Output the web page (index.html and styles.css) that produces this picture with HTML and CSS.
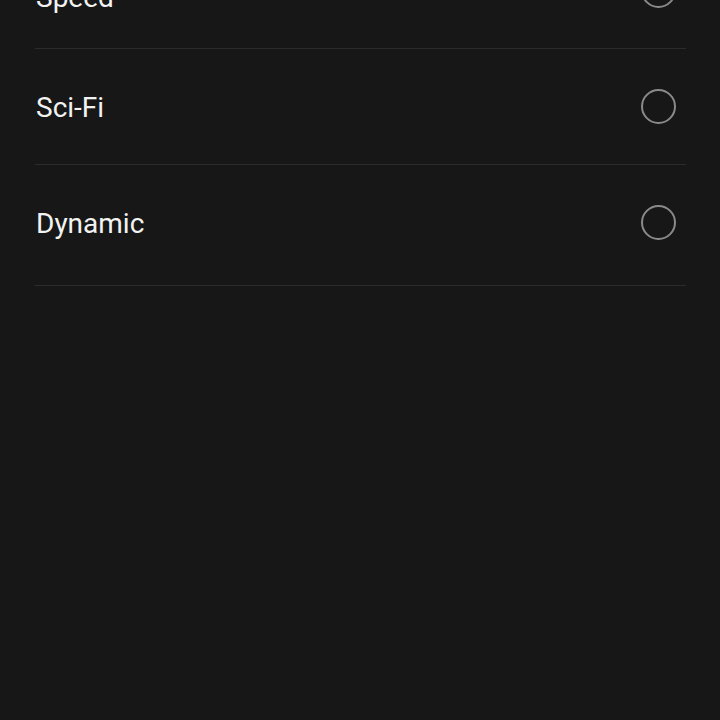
FILE: index.html
```html
<!DOCTYPE html>
<html>
<head>
<meta charset="utf-8">
<link rel="stylesheet" href="styles.css">
</head>
<body>
<ul class="list">
  <li class="row"><span class="label label-low">Speed</span><span class="radio"></span></li>
  <li class="row"><span class="label">Sci-Fi</span><span class="radio"></span></li>
  <li class="row row-last"><span class="label">Dynamic</span><span class="radio"></span></li>
</ul>
</body>
</html>
```
FILE: styles.css
```css
html, body {
  margin: 0;
  padding: 0;
  background: #171717;
  height: 100%;
  overflow: hidden;
}
.list {
  list-style: none;
  margin: -67px 34px 0 35px;
  padding: 0;
}
.row {
  display: flex;
  align-items: center;
  justify-content: space-between;
  height: 115px;
  border-bottom: 1px solid #2c2c2c;
}
.row-last {
  height: 115px;
  padding-bottom: 5px;
}
.label {
  font-family: Roboto, "Noto Sans", sans-serif;
  font-size: 28px;
  color: #f2f2f2;
  padding-left: 1px;
  padding-top: 2px;
}
.label-low {
  padding-top: 13px;
}
.radio {
  width: 31px;
  height: 31px;
  border: 2px solid #8a8a8a;
  border-radius: 50%;
  margin-right: 10px;
  box-sizing: content-box;
}
```
